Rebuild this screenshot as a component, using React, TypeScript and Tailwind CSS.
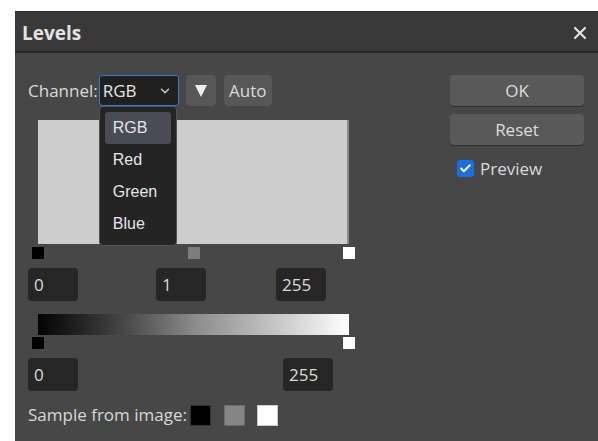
import { ChevronDown, X, Check } from 'lucide-react';

const ui = { fontFamily: '"Open Sans", "Noto Sans", sans-serif' };
const menu = { fontFamily: '"Liberation Sans", Arial, sans-serif' };

const Handle = ({ tone, left }: { tone: string; left: string }) => (
  <div className={`absolute top-0 w-[12px] h-[12px] ${tone} ${left}`} />
);

const NumBox = ({ value, className = '' }: { value: string; className?: string }) => (
  <div
    className={`w-[50px] h-[33px] rounded-[4px] bg-[#262626] flex items-center pl-[6px] text-[17px] text-[#dcdcdc] ${className}`}
  >
    {value}
  </div>
);

const App = () => {
  const channels = ['RGB', 'Red', 'Green', 'Blue'];

  return (
    <div className="w-[598px] h-[441px] bg-white pl-[15px] pt-[11px] overflow-hidden" style={ui}>
      <div className="w-[583px] h-[430px] bg-[#474747] border-t border-[#2a2a2a] flex flex-col">
        {/* Title bar */}
        <div className="h-[41px] shrink-0 bg-[#393939] border-b-2 border-[#282828] flex items-center justify-between pt-[3px] pl-[7px] pr-[8px]">
          <span className="text-[19px] font-bold text-[#e2e2e2]">Levels</span>
          <X className="w-[20px] h-[20px] text-[#e0e0e0]" strokeWidth={2.6} />
        </div>

        <div className="flex pt-[22px] pl-[13px]">
          {/* Left column */}
          <div className="w-[421px] flex flex-col">
            <div className="flex items-center h-[31px]">
              <span className="text-[17px] text-[#dadada] mr-[1px]">Channel:</span>
              <div className="relative">
                <div className="w-[80px] h-[31px] rounded-[3px] border border-[#3a78c9] bg-[#202020] flex items-center justify-between pl-[3px] pr-[6px] text-[17px] text-[#e4e4e4]">
                  RGB
                  <ChevronDown className="w-[14px] h-[14px] text-[#d0d0d0]" strokeWidth={2.4} />
                </div>
                {/* Channel list */}
                <div
                  className="absolute left-0 top-[31px] w-[78px] h-[140px] rounded-[4px] border border-[#555] bg-[#242424] pt-[5px] px-[5px] z-10"
                  style={menu}
                >
                  {channels.map((c, i) => (
                    <div
                      key={c}
                      className={`h-[32px] flex items-center pl-[8px] rounded-[3px] text-[16px] text-[#e6e6e6] ${
                        i === 0 ? 'bg-[#4b4b56]' : ''
                      }`}
                    >
                      {c}
                    </div>
                  ))}
                </div>
              </div>
              <div className="ml-[7px] w-[30px] h-[31px] rounded-[4px] bg-[#575757] flex items-center justify-center">
                <svg width="12" height="12" viewBox="0 0 12 12">
                  <path d="M0 0 H12 L6 12 Z" fill="#eeeeee" />
                </svg>
              </div>
              <div className="ml-[8px] w-[48px] h-[31px] rounded-[4px] bg-[#575757] flex items-center justify-center text-[17px] text-[#dadada]">
                Auto
              </div>
            </div>

            {/* Histogram */}
            <div className="mt-[14px] ml-[10px] w-[311px] h-[124px] bg-[#cdcdcd] border-r-2 border-[#8a8a8a]" />

            <div className="relative mt-[3px] ml-[4px] h-[12px] w-[323px]">
              <Handle tone="bg-black" left="left-0" />
              <Handle tone="bg-[#7d7d7d]" left="left-[156px]" />
              <Handle tone="bg-white" left="left-[311px]" />
            </div>

            <div className="flex mt-[9px]">
              <NumBox value="0" />
              <NumBox value="1" className="ml-[78px]" />
              <NumBox value="255" className="ml-[70px]" />
            </div>

            {/* Output gradient */}
            <div className="mt-[13px] ml-[10px] w-[311px] h-[21px] bg-gradient-to-r from-[#050505] via-[#8a8a8a] to-white" />

            <div className="relative mt-[2px] ml-[4px] h-[12px] w-[323px]">
              <Handle tone="bg-black" left="left-0" />
              <Handle tone="bg-white" left="left-[311px]" />
            </div>

            <div className="flex mt-[9px]">
              <NumBox value="0" />
              <NumBox value="255" className="ml-[205px]" />
            </div>

            <div className="flex items-center mt-[13px] h-[22px]">
              <span className="text-[17px] text-[#d8d8d8]">Sample from image:</span>
              <div className="ml-[3px] w-[21px] h-[21px] bg-black border border-[#333]" />
              <div className="ml-[13px] w-[21px] h-[21px] bg-[#858585] border border-[#6a6a6a]" />
              <div className="ml-[12px] w-[21px] h-[21px] bg-white border border-[#ccc]" />
            </div>
          </div>

          {/* Right column */}
          <div className="w-[134px] ml-[1px] flex flex-col">
            <div className="h-[31px] rounded-[4px] bg-[#595959] shadow-[0_1px_0_#2e2e2e] flex items-center justify-center text-[17px] text-[#dcdcdc]">
              OK
            </div>
            <div className="mt-[8px] h-[31px] rounded-[4px] bg-[#595959] shadow-[0_1px_0_#2e2e2e] flex items-center justify-center text-[17px] text-[#dcdcdc]">
              Reset
            </div>
            <div className="mt-[11px] ml-[7px] flex items-center">
              <div className="w-[17px] h-[17px] rounded-[3px] bg-[#1a6fe0] flex items-center justify-center">
                <Check className="w-[13px] h-[13px] text-white" strokeWidth={3.5} />
              </div>
              <span className="ml-[6px] text-[17px] text-[#dadada]">Preview</span>
            </div>
          </div>
        </div>
      </div>
    </div>
  );
};

export default App;
